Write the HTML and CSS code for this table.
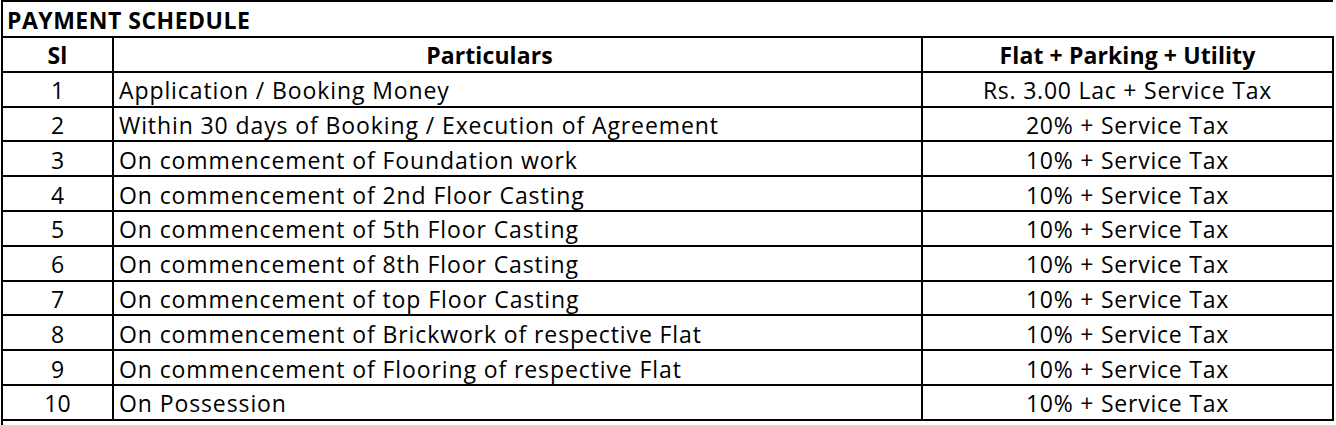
FILE: index.html
```html
<!DOCTYPE html>
<html>
<head>
<meta charset="utf-8">
<link rel="stylesheet" href="styles.css">
</head>
<body>
<table class="sched">
  <colgroup>
    <col class="c-sl">
    <col class="c-part">
    <col class="c-amt">
  </colgroup>
  <tr class="title-row"><td colspan="3" class="title">PAYMENT SCHEDULE</td></tr>
  <tr class="head"><th>Sl</th><th class="h-part">Particulars</th><th>Flat + Parking + Utility</th></tr>
  <tr><td class="sl">1</td><td class="part">Application / Booking Money</td><td class="amt">Rs. 3.00 Lac + Service Tax</td></tr>
  <tr><td class="sl">2</td><td class="part">Within 30 days of Booking / Execution of Agreement</td><td class="amt">20% + Service Tax</td></tr>
  <tr><td class="sl">3</td><td class="part">On commencement of Foundation work</td><td class="amt">10% + Service Tax</td></tr>
  <tr><td class="sl">4</td><td class="part">On commencement of 2nd Floor Casting</td><td class="amt">10% + Service Tax</td></tr>
  <tr><td class="sl">5</td><td class="part">On commencement of 5th Floor Casting</td><td class="amt">10% + Service Tax</td></tr>
  <tr><td class="sl">6</td><td class="part">On commencement of 8th Floor Casting</td><td class="amt">10% + Service Tax</td></tr>
  <tr><td class="sl">7</td><td class="part">On commencement of top Floor Casting</td><td class="amt">10% + Service Tax</td></tr>
  <tr><td class="sl">8</td><td class="part">On commencement of Brickwork of respective Flat</td><td class="amt">10% + Service Tax</td></tr>
  <tr><td class="sl">9</td><td class="part">On commencement of Flooring of respective Flat</td><td class="amt">10% + Service Tax</td></tr>
  <tr><td class="sl">10</td><td class="part">On Possession</td><td class="amt">10% + Service Tax</td></tr>
  <tr class="tail"><td colspan="3" class="tail-cell"></td></tr>
</table>
</body>
</html>
```
FILE: styles.css
```css
html, body {
  margin: 0;
  padding: 0;
  background: #fff;
}
body {
  font-family: "Open Sans", "Liberation Sans", sans-serif;
  color: #000;
  overflow: hidden;
}
.sched {
  border-collapse: collapse;
  width: 1333px;
  margin-left: 1px;
  table-layout: fixed;
  font-size: 23px;
}
.c-sl { width: 111px; }
.c-part { width: 809px; }
.c-amt { width: 411px; }
.sched td, .sched th {
  border: 2px solid #000;
  height: 34.8px;
  padding: 2px 0 0 0;
  line-height: 30px;
  white-space: nowrap;
  box-sizing: border-box;
}
.title-row td {
  height: 36px;
}
.title {
  font-weight: 700;
  text-align: left;
  padding-left: 4px !important;
  border-right: none !important;
  letter-spacing: 0.5px;
}
.head th {
  font-weight: 700;
  text-align: center;
  letter-spacing: 0.1px;
}
.head .h-part {
  padding-right: 56px;
}
.sl {
  text-align: center;
}
.part {
  text-align: left;
  padding-left: 5px !important;
  letter-spacing: 0.9px;
}
.amt {
  text-align: center;
  letter-spacing: 0.77px;
}
.tail td {
  height: 8px;
}
.tail-cell {
  border-right: none !important;
  border-bottom: none !important;
}
```
